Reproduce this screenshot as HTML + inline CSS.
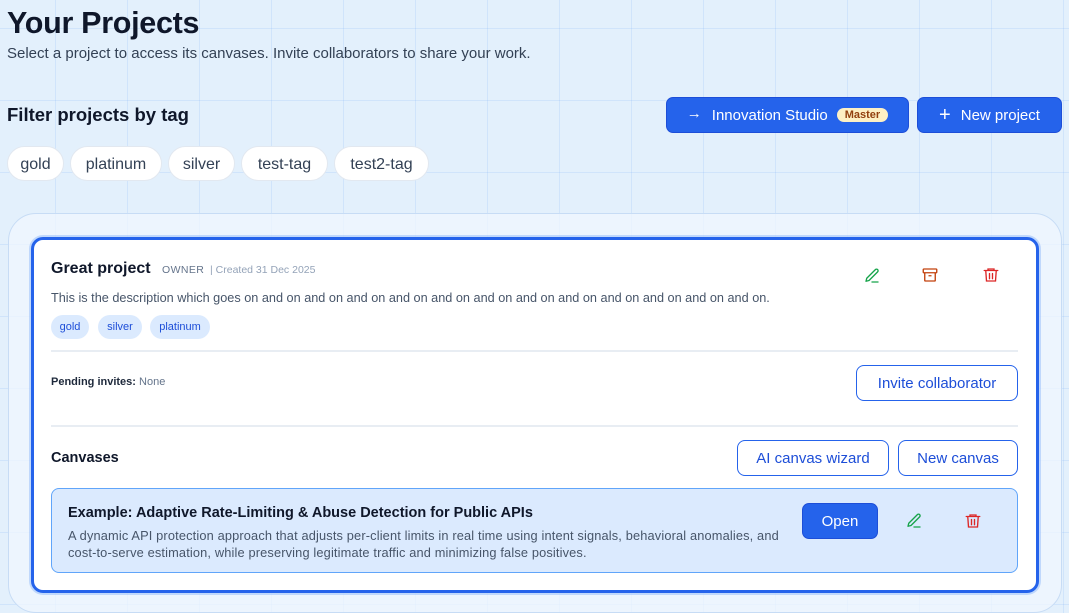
<!DOCTYPE html>
<html><head><meta charset="utf-8"><style>
*{box-sizing:border-box;margin:0;padding:0}
body{width:1069px;height:600px;overflow:hidden;font-family:"Liberation Sans",sans-serif;color:#0f172a;
background-color:#e3f0fc;
background-image:linear-gradient(rgba(59,130,246,.11) 1px,transparent 1px),linear-gradient(90deg,rgba(59,130,246,.11) 1px,transparent 1px);
background-size:72px 72px;background-position:55px 28px;position:relative}
.abs{position:absolute}
h1{position:absolute;left:7px;top:6px;font-size:30.5px;font-weight:700;letter-spacing:-.3px}
.sub{left:7px;top:45px;font-size:15px;color:#334155}
.ft{left:7px;top:104px;font-size:18.5px;font-weight:700;color:#0f172a}
.chip{position:absolute;top:146px;height:35px;background:#fff;border-radius:18px;font-size:16px;color:#334155;line-height:35px;text-align:center;border:1px solid #e2e8f0}
.btn{position:absolute;background:#2563eb;color:#fff;border-radius:7px;font-size:15px;display:flex;align-items:center;justify-content:center;border:1px solid #1d4ed8}
.panel{left:8px;top:213px;width:1054px;height:400px;border-radius:28px;background:rgba(240,247,255,.75);border:1px solid #c7dcf5}
.card{left:31px;top:237px;width:1008px;height:356px;border:3px solid #2563eb;border-radius:12px;background:#fff;box-shadow:0 0 0 2px rgba(59,130,246,.25)}
.tag{position:absolute;top:315px;height:24px;background:#dbeafe;border-radius:12px;color:#1d4ed8;font-size:11px;line-height:24px;text-align:center}
.ob{position:absolute;border:1.5px solid #2563eb;border-radius:8px;color:#1d4ed8;font-size:15px;display:flex;align-items:center;justify-content:center;background:#fff}
.hr{position:absolute;left:51px;width:967px;height:2px;background:#e8edf3}
</style></head><body>
<h1>Your Projects</h1>
<div class="abs sub">Select a project to access its canvases. Invite collaborators to share your work.</div>
<div class="abs ft">Filter projects by tag</div>
<div class="chip" style="left:7px;width:57px">gold</div>
<div class="chip" style="left:70px;width:92px">platinum</div>
<div class="chip" style="left:168px;width:67px">silver</div>
<div class="chip" style="left:241px;width:87px">test-tag</div>
<div class="chip" style="left:334px;width:95px">test2-tag</div>
<div class="btn" style="left:666px;top:97px;width:243px;height:36px"><span style="margin-right:10px;line-height:1;position:relative;top:-2px">→</span>Innovation Studio<span style="margin-left:9px;background:#fdf0c4;color:#92400e;font-size:11px;font-weight:700;border-radius:8px;padding:1px 8px">Master</span></div>
<div class="btn" style="left:917px;top:97px;width:145px;height:36px"><span style="font-size:20px;margin-right:10px;line-height:1">+</span>New project</div>
<div class="abs panel"></div>
<div class="abs card"></div>
<div class="abs" style="left:51px;top:260px;font-size:16px;font-weight:700">Great project</div>
<div class="abs" style="left:162px;top:264px;font-size:10.5px;color:#64748b;letter-spacing:.4px">OWNER</div>
<div class="abs" style="left:210px;top:264px;font-size:10.5px;color:#94a3b8">| Created 31 Dec 2025</div>
<div class="abs" style="left:51px;top:291px;font-size:12.7px;color:#475569">This is the description which goes on and on and on and on and on and on and on and on and on and on and on and on and on.</div>
<div class="tag" style="left:51px;width:38px">gold</div>
<div class="tag" style="left:98px;width:44px">silver</div>
<div class="tag" style="left:150px;width:60px">platinum</div>
<svg class="abs" style="left:863px;top:267px" width="18" height="18" viewBox="0 0 24 24" fill="none" stroke="#16a34a" stroke-width="1.8" stroke-linecap="round" stroke-linejoin="round"><path d="M16.5 3.5a2.1 2.1 0 0 1 3 3L8 18l-4 1 1-4z"/><path d="M12 20h8"/></svg>
<svg class="abs" style="left:921px;top:266px" width="18" height="18" viewBox="0 0 24 24" fill="none" stroke="#c2410c" stroke-width="1.8" stroke-linejoin="round"><rect x="3" y="4" width="18" height="5" rx="1"/><path d="M5 9v10a1 1 0 0 0 1 1h12a1 1 0 0 0 1-1V9M10 13h4"/></svg>
<svg class="abs" style="left:982px;top:266px" width="18" height="18" viewBox="0 0 24 24" fill="none" stroke="#dc2626" stroke-width="1.8" stroke-linecap="round"><path d="M3 6h18M8 6V4h8v2M5 6l1 14h12l1-14M10 10v7M14 10v7"/></svg>
<div class="hr" style="top:350px"></div>
<div class="abs" style="left:51px;top:376px;font-size:11px;color:#1e293b;font-weight:700">Pending invites: <span style="font-weight:400;color:#64748b">None</span></div>
<div class="ob" style="left:856px;top:365px;width:162px;height:36px">Invite collaborator</div>
<div class="hr" style="top:425px"></div>
<div class="abs" style="left:51px;top:450px;font-size:14.5px;font-weight:700;color:#0f172a">Canvases</div>
<div class="ob" style="left:737px;top:440px;width:152px;height:36px">AI canvas wizard</div>
<div class="ob" style="left:898px;top:440px;width:120px;height:36px">New canvas</div>
<div class="abs" style="left:51px;top:488px;width:967px;height:85px;background:#dbeafe;border:1.5px solid #60a5fa;border-radius:8px"></div>
<div class="abs" style="left:68px;top:505px;font-size:14.5px;font-weight:700;color:#0f172a">Example: Adaptive Rate-Limiting &amp; Abuse Detection for Public APIs</div>
<div class="abs" style="left:68px;top:527px;width:718px;font-size:12.8px;line-height:17px;color:#475569;letter-spacing:.15px">A dynamic API protection approach that adjusts per-client limits in real time using intent signals, behavioral anomalies, and cost-to-serve estimation, while preserving legitimate traffic and minimizing false positives.</div>
<div class="btn" style="left:802px;top:503px;width:76px;height:36px">Open</div>
<svg class="abs" style="left:905px;top:512px" width="18" height="18" viewBox="0 0 24 24" fill="none" stroke="#16a34a" stroke-width="1.8" stroke-linecap="round" stroke-linejoin="round"><path d="M16.5 3.5a2.1 2.1 0 0 1 3 3L8 18l-4 1 1-4z"/><path d="M12 20h8"/></svg>
<svg class="abs" style="left:964px;top:512px" width="18" height="18" viewBox="0 0 24 24" fill="none" stroke="#dc2626" stroke-width="1.8" stroke-linecap="round"><path d="M3 6h18M8 6V4h8v2M5 6l1 14h12l1-14M10 10v7M14 10v7"/></svg>
</body></html>
